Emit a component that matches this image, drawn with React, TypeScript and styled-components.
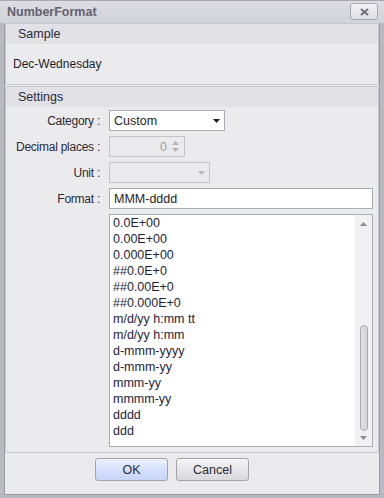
import styled, { createGlobalStyle } from "styled-components";

const Global = createGlobalStyle`
  html, body { margin: 0; padding: 0; background: #ffffff; }
  body { font-family: "Liberation Sans", Arial, sans-serif; font-size: 12px; color: #1e1e2a; }
`

const Frame = styled.div`
  width: 384px;
  height: 498px;
  box-sizing: border-box;
  background: #b9b9c1;
  padding: 0 4px 4px 4px;
  display: flex;
  flex-direction: column;
`
const TitleBar = styled.div`
  height: 23px;
  flex: none;
  display: flex;
  align-items: center;
  justify-content: space-between;
  margin: 0 -4px;
  padding: 0 6px 1px 7px;
  background: linear-gradient(#dcdce2, #d2d2d9);
  border-top: 1px solid #a8a8b0;
  box-sizing: border-box;
`
const Title = styled.span`
  font-weight: bold;
  font-size: 12.5px;
  color: #62626e;
`
const CloseButton = styled.div`
  width: 26px;
  height: 15px;
  border: 1px solid #a6a6ae;
  border-radius: 3px;
  background: linear-gradient(#f2f2f5, #dedee3);
  display: flex;
  align-items: center;
  justify-content: center;
`
const Body = styled.div`
  flex: 1;
  background: #ebebee;
  border: 1px solid #9c9ca6;
  border-top: none;
  display: flex;
  flex-direction: column;
`
const Group = styled.div<{ $grow?: boolean }>`
  border: 1px solid #c6c6cc;
  border-radius: 2px;
  display: flex;
  flex-direction: column;
  flex: ${p => (p.$grow ? 1 : "none")};
  margin-bottom: 1px;
`
const GroupHeader = styled.div`
  height: 20px;
  line-height: 20px;
  padding-left: 12px;
  background: #e1e1e6;
  color: #2a2a36;
  font-size: 12.5px;
`
const SampleBody = styled.div`
  height: 40px;
  display: flex;
  align-items: center;
  padding-left: 7px;
  font-size: 12px;
`
const SettingsBody = styled.div`
  flex: 1;
  display: grid;
  grid-template-columns: 103px 1fr;
  grid-auto-rows: auto;
  row-gap: 5px;
  padding: 3px 5px 5px 0;
  align-items: center;
  align-content: start;
`
const Label = styled.div`
  text-align: right;
  padding-right: 9px;
  color: #2a2a36;
  white-space: nowrap;
  font-size: 12px;
  letter-spacing: -0.25px;
`
const Field = styled.div<{ $w?: number; $disabled?: boolean }>`
  width: ${p => (p.$w ? `${p.$w}px` : "auto")};
  height: 21px;
  box-sizing: border-box;
  border: 1px solid ${p => (p.$disabled ? "#c4c4ca" : "#abadb6")};
  background: ${p => (p.$disabled ? "#ebebee" : "#ffffff")};
  display: flex;
  align-items: center;
  padding: 0 4px;
  font-size: 12.5px;
  color: ${p => (p.$disabled ? "#9a9aa0" : "#1e1e2a")};
`
const FieldText = styled.span<{ $right?: boolean }>`
  flex: 1;
  text-align: ${p => (p.$right ? "right" : "left")};
`
const Spin = styled.div`
  display: flex;
  flex-direction: column;
  gap: 3px;
  margin-left: 5px;
  margin-right: 1px;
`
const ListBox = styled.div`
  grid-column: 2;
  height: 233px;
  box-sizing: border-box;
  border: 1px solid #abadb6;
  background: #ffffff;
  display: flex;
`
const Items = styled.div`
  flex: 1;
  padding: 0 0 0 3px;
  overflow: hidden;
`
const Item = styled.div`
  height: 16px;
  line-height: 16px;
  font-size: 12.5px;
  color: #1e1e3a;
  white-space: nowrap;
`
const ScrollBar = styled.div`
  width: 17px;
  background: #f1f1f4;
  display: flex;
  flex-direction: column;
  align-items: center;
  padding: 7px 0 6px;
  box-sizing: border-box;
`
const Track = styled.div`
  flex: 1;
  width: 100%;
  display: flex;
  flex-direction: column;
  justify-content: flex-end;
  align-items: center;
  padding: 0 0 5px;
`
const Thumb = styled.div`
  width: 6px;
  height: 104px;
  border: 1px solid #a9a9b2;
  border-radius: 4px;
  background: linear-gradient(90deg, #e2e2e7, #d3d3d9);
`
const Footer = styled.div`
  flex: none;
  height: 40px;
  display: flex;
  justify-content: center;
  align-items: flex-start;
  gap: 8px;
  padding-top: 4px;
  padding-right: 40px;
  box-sizing: border-box;
`
const Button = styled.div<{ $primary?: boolean }>`
  width: 73px;
  height: 23px;
  box-sizing: border-box;
  border: 1px solid #a4a4ad;
  border-radius: 3px;
  display: flex;
  align-items: center;
  justify-content: center;
  font-size: 12.5px;
  color: #2a2a36;
  background: ${p =>
    p.$primary
      ? "linear-gradient(#eef2fd, #d3defa 55%, #c9d6f8)"
      : "linear-gradient(#f6f6f8, #e4e4e8 55%, #dadade)"};
`

const Tri = ({ up, color, w = 7 }: { up?: boolean; color: string; w?: number }) => (
  <svg width={w} height={4} viewBox="0 0 7 4">
    <path d={up ? "M0 4 L3.5 0 L7 4 Z" : "M0 0 L7 0 L3.5 4 Z"} fill={color} />
  </svg>
)

const formats = [
  "0.0E+00",
  "0.00E+00",
  "0.000E+00",
  "##0.0E+0",
  "##0.00E+0",
  "##0.000E+0",
  "m/d/yy h:mm tt",
  "m/d/yy h:mm",
  "d-mmm-yyyy",
  "d-mmm-yy",
  "mmm-yy",
  "mmmm-yy",
  "dddd",
  "ddd",
]

export default function App() {
  return (
    <>
      <Global />
      <Frame>
        <TitleBar>
          <Title>NumberFormat</Title>
          <CloseButton>
            <svg width="9" height="8" viewBox="0 0 9 8">
              <path d="M1 1 L8 7 M8 1 L1 7" stroke="#6e6e7a" strokeWidth="2" />
            </svg>
          </CloseButton>
        </TitleBar>
        <Body>
          <Group>
            <GroupHeader>Sample</GroupHeader>
            <SampleBody>Dec-Wednesday</SampleBody>
          </Group>
          <Group $grow>
            <GroupHeader>Settings</GroupHeader>
            <SettingsBody>
              <Label>Category :</Label>
              <Field $w={116}>
                <FieldText>Custom</FieldText>
                <Tri color="#1e1e2a" />
              </Field>
              <Label>Decimal places :</Label>
              <Field $w={76} $disabled>
                <FieldText $right>0</FieldText>
                <Spin>
                  <Tri up color="#b4b4ba" />
                  <Tri color="#b4b4ba" />
                </Spin>
              </Field>
              <Label>Unit :</Label>
              <Field $w={101} $disabled>
                <FieldText />
                <Tri color="#b8b8be" />
              </Field>
              <Label>Format :</Label>
              <Field>
                <FieldText>MMM-dddd</FieldText>
              </Field>
              <ListBox>
                <Items>
                  {formats.map(f => (
                    <Item key={f}>{f}</Item>
                  ))}
                </Items>
                <ScrollBar>
                  <Tri up color="#8c8c96" />
                  <Track>
                    <Thumb />
                  </Track>
                  <Tri color="#8c8c96" />
                </ScrollBar>
              </ListBox>
            </SettingsBody>
          </Group>
          <Footer>
            <Button $primary>OK</Button>
            <Button>Cancel</Button>
          </Footer>
        </Body>
      </Frame>
    </>
  )
}
